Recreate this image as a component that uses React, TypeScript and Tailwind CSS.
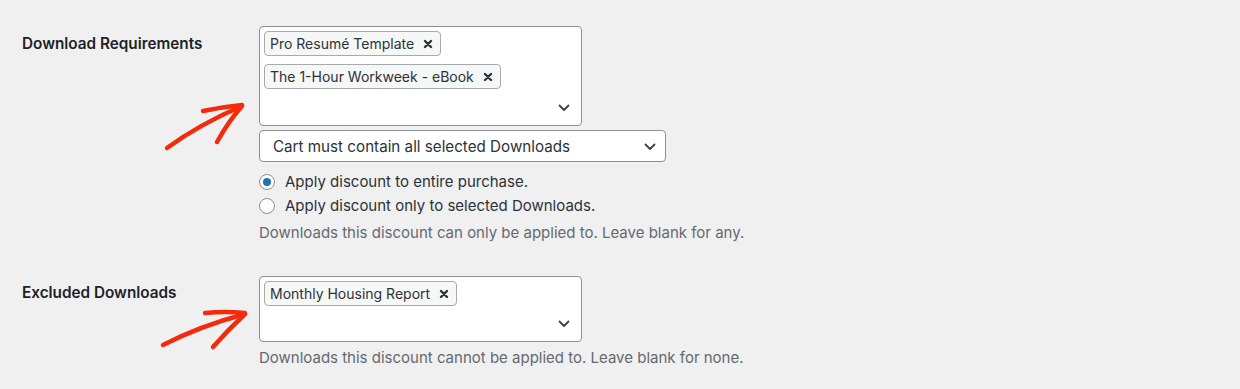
import React from "react";

const font = { fontFamily: '"Inter", "Liberation Sans", sans-serif' };

function Chevron({ className = "" }: { className?: string }) {
  return (
    <svg className={className} width="12" height="8" viewBox="0 0 12 8" fill="none">
      <path d="M1.5 1.5 L6 6 L10.5 1.5" stroke="#3c434a" strokeWidth="1.8" strokeLinecap="round" strokeLinejoin="round" />
    </svg>
  );
}

function Tag({ label }: { label: string }) {
  return (
    <div className="flex h-[25px] w-fit items-center rounded-[4px] border border-[#a7aaad] bg-[#f6f7f7] pl-[5px] pr-[7px] text-[14px] text-[#2c3338]">
      <span>{label}</span>
      <svg className="ml-[9px] mt-[1px]" width="10" height="10" viewBox="0 0 10 10">
        <path d="M2 2 L8 8 M8 2 L2 8" stroke="#2c3338" strokeWidth="2.4" strokeLinecap="round" />
      </svg>
    </div>
  );
}

function MultiBox({ tags, height }: { tags: string[]; height: string }) {
  return (
    <div className={`flex w-[323px] rounded-[4px] border border-[#8c8f94] bg-white ${height}`}>
      <div className="flex flex-1 flex-col gap-[8px] pl-[4px] pt-[4px]">
        {tags.map((t) => (
          <Tag key={t} label={t} />
        ))}
      </div>
      <div className="flex items-end pb-[13px] pr-[11px]">
        <Chevron />
      </div>
    </div>
  );
}

function Radio({ checked, label }: { checked?: boolean; label: string }) {
  return (
    <div className="flex h-[24px] items-center">
      <div className="flex h-[16px] w-[16px] items-center justify-center rounded-full border border-[#8c8f94] bg-white">
        {checked && <div className="h-[8px] w-[8px] rounded-full bg-[#2271b1]" />}
      </div>
      <span className="ml-[10px] text-[15px] text-[#2c3338]">{label}</span>
    </div>
  );
}

export default function App() {
  return (
    <div className="relative h-[389px] w-[1240px] overflow-hidden bg-[#f0f0f1]" style={font}>
      <div className="flex flex-col pt-[26px]">
        <div className="flex">
          <div className="w-[259px] pl-[22px] pt-[8px] text-[15.3px] font-semibold leading-[20px] text-[#1d2327]">
            Download Requirements
          </div>
          <div className="flex flex-col">
            <MultiBox tags={["Pro Resumé Template", "The 1-Hour Workweek - eBook"]} height="h-[100px]" />
            <div className="mt-[4px] flex h-[32px] w-[407px] items-center justify-between rounded-[4px] border border-[#8c8f94] bg-white pl-[13px] pr-[9px] pt-[2px] text-[15.2px] text-[#2c3338]">
              <span>Cart must contain all selected Downloads</span>
              <Chevron />
            </div>
            <div className="mt-[8px] flex flex-col">
              <Radio checked label="Apply discount to entire purchase." />
              <Radio label="Apply discount only to selected Downloads." />
            </div>
            <div className="mt-[5px] text-[15px] leading-[20px] text-[#646970]">
              Downloads this discount can only be applied to. Leave blank for any.
            </div>
          </div>
        </div>
        <div className="mt-[33px] flex">
          <div className="w-[259px] pl-[22px] pt-[7px] text-[15.3px] font-semibold leading-[20px] text-[#1d2327]">
            Excluded Downloads
          </div>
          <div className="flex flex-col">
            <MultiBox tags={["Monthly Housing Report"]} height="h-[66px]" />
            <div className="mt-[6px] text-[15px] leading-[20px] text-[#646970]">
              Downloads this discount cannot be applied to. Leave blank for none.
            </div>
          </div>
        </div>
      </div>
      <svg className="pointer-events-none absolute left-0 top-0" width="1240" height="389" fill="none">
        <g stroke="#f42a0c" strokeWidth="4.5" strokeLinecap="round" strokeLinejoin="round">
          <path d="M167 148 Q 200 124 242 106" />
          <path d="M203 111 Q 222 107 242 105" />
          <path d="M217 142 Q 228 122 242 106" />
          <path d="M163 345 Q 200 326 245 314" />
          <path d="M205 313 Q 225 311 245 313" />
          <path d="M213 347 Q 228 330 245 314" />
        </g>
      </svg>
    </div>
  );
}
